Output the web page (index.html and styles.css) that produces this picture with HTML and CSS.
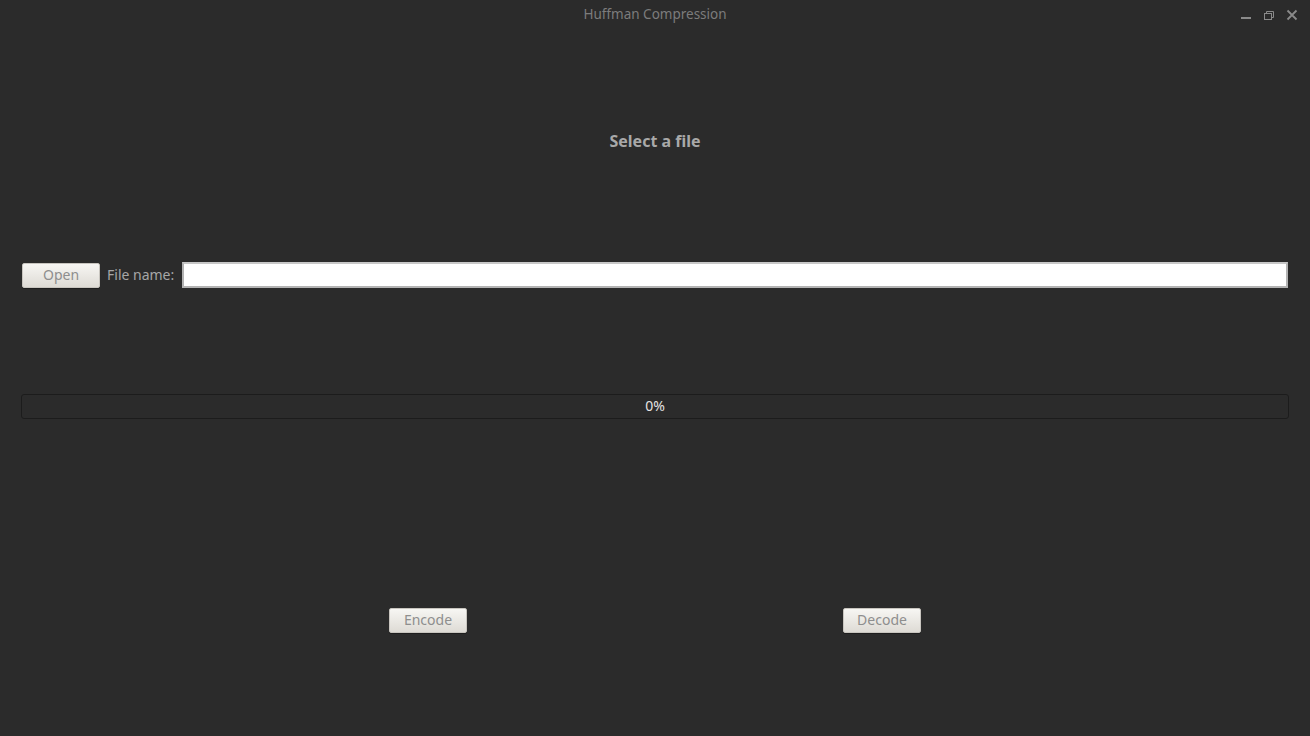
FILE: index.html
```html
<!DOCTYPE html>
<html>
<head>
<meta charset="utf-8">
<link rel="stylesheet" href="styles.css">
</head>
<body>
<div class="window">
  <header class="titlebar">
    <div></div>
    <div class="title">Huffman Compression</div>
    <div class="controls">
      <svg width="12" height="12" viewBox="0 0 12 12"><rect x="1" y="8" width="10" height="2" fill="#8a8a8a"/></svg>
      <svg width="12" height="12" viewBox="0 0 12 12" fill="none" stroke="#8a8a8a" stroke-width="1"><rect x="1.5" y="4.5" width="7" height="6"/><path d="M3.5 4.5V2.5H10.5V8.5H8.5"/></svg>
      <svg width="12" height="12" viewBox="0 0 12 12" stroke="#8a8a8a" stroke-width="1.8"><path d="M1.5 1.5L10.5 10.5M10.5 1.5L1.5 10.5"/></svg>
    </div>
  </header>
  <main class="content">
    <h1 class="heading">Select a file</h1>
    <div class="file-row">
      <button class="btn btn-open">Open</button>
      <label class="label">File name:</label>
      <input class="input" type="text">
    </div>
    <div class="progress"><span>0%</span></div>
    <div class="actions">
      <button class="btn">Encode</button>
      <button class="btn">Decode</button>
    </div>
  </main>
</div>
</body>
</html>
```
FILE: styles.css
```css
html, body {
  margin: 0;
  padding: 0;
  background: #2b2b2b;
  font-family: "Noto Sans", "DejaVu Sans", sans-serif;
}
.window {
  width: 1310px;
  height: 736px;
  background: #2b2b2b;
}
.titlebar {
  height: 28px;
  display: grid;
  grid-template-columns: 1fr auto 1fr;
  align-items: center;
}
.title {
  color: #7c7c7c;
  font-size: 13.5px;
  padding-bottom: 1px;
}
.controls {
  justify-self: end;
  display: flex;
  gap: 11px;
  padding-right: 12px;
  padding-top: 2px;
}
.controls svg { display: block; }
.content {
  padding: 0 21px;
}
.heading {
  margin: 101px 0 0;
  text-align: center;
  font-size: 16px;
  font-weight: bold;
  color: #a9a9a9;
  line-height: 24px;
}
.file-row {
  margin-top: 109px;
  display: flex;
  align-items: center;
  height: 26px;
}
.btn {
  width: 78px;
  height: 25px;
  border: 1px solid #c8c5bf;
  border-radius: 2px;
  background: linear-gradient(#f7f6f3, #dedbd5);
  color: #8e8e8e;
  font-family: "Noto Sans", "DejaVu Sans", sans-serif;
  font-size: 14px;
  padding: 0 0 2px;
  box-shadow: 0 1px 0 #1e1e1e;
}
.btn-open { margin-left: 1px; }
.label {
  color: #a6a6a6;
  font-size: 14px;
  margin-left: 7px;
  margin-right: 8px;
  padding-bottom: 2px;
  white-space: nowrap;
}
.input {
  flex: 1;
  height: 26px;
  box-sizing: border-box;
  border: 2px solid #b3b3b3;
  border-top-color: #c7c7c7;
  background: #fff;
  margin: 0 1px 0 0;
}
.progress {
  margin-top: 106px;
  height: 25px;
  box-sizing: border-box;
  border: 1px solid #1c1c1c;
  border-radius: 3px;
  display: flex;
  align-items: center;
  justify-content: center;
  color: #e4e4e4;
  font-size: 14px;
  padding-bottom: 2px;
}
.actions {
  margin-top: 189px;
  display: flex;
  justify-content: center;
  gap: 376px;
}
```
